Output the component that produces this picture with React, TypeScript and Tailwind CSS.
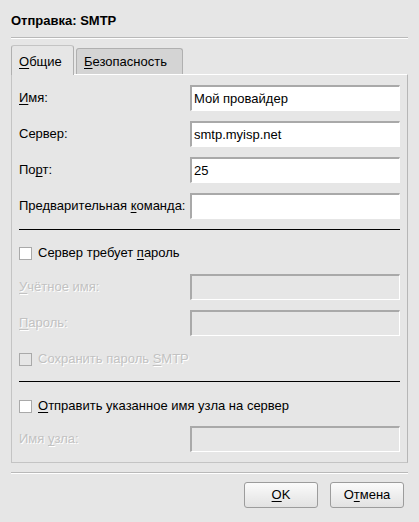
import React from "react";

const FONT = "font-['Liberation_Sans',Arial,sans-serif]";

const Mn: React.FC<{ children: React.ReactNode }> = ({ children }) => (
  <span className="underline underline-offset-[2px]">{children}</span>
);

const TextField: React.FC<{ value?: string; disabled?: boolean }> = ({ value, disabled }) => (
  <div
    className={`w-[210px] h-[26px] flex items-center px-[2px] text-[13px] text-black border-t-2 border-l-2 border-t-[#a9a9a9] border-l-[#a9a9a9] border-b border-r border-b-white border-r-white ${
      disabled ? "bg-[#e6e6e6]" : "bg-white"
    }`}
  >
    {value}
  </div>
);

const Row: React.FC<{ label: React.ReactNode; disabled?: boolean; value?: string; className?: string }> = ({
  label,
  disabled,
  value,
  className = "",
}) => (
  <div className={`flex items-center justify-between h-[26px] ${className}`}>
    <span
      className={`text-[13px] ${
        disabled ? "text-[#c2c2c2] [text-shadow:1px_1px_0_#fff]" : "text-black"
      }`}
    >
      {label}
    </span>
    <TextField value={value} disabled={disabled} />
  </div>
);

const Check: React.FC<{ label: React.ReactNode; disabled?: boolean; className?: string }> = ({
  label,
  disabled,
  className = "",
}) => (
  <div className={`flex items-center h-[26px] ${className}`}>
    <div
      className={`w-[13px] h-[13px] border border-[#a9a9a9] ${disabled ? "bg-[#e6e6e6]" : "bg-white"}`}
    />
    <span
      className={`ml-[6px] text-[13px] ${
        disabled ? "text-[#c2c2c2] [text-shadow:1px_1px_0_#fff]" : "text-black"
      }`}
    >
      {label}
    </span>
  </div>
);

const Btn: React.FC<{ children: React.ReactNode }> = ({ children }) => (
  <button
    type="button"
    className="w-[74px] h-[26px] rounded-[3px] border border-[#9c9c9c] bg-gradient-to-b from-[#fbfbfb] to-[#e2e2e2] text-[13px] text-black flex items-center justify-center"
  >
    {children}
  </button>
);

export default function App() {
  return (
    <div className={`w-[419px] h-[522px] bg-[#e6e6e6] px-[11px] ${FONT}`}>
      <div className="pt-[13px] h-[37px] text-[13px] leading-[16px] font-bold text-black">Отправка: SMTP</div>
      <div className="h-[2px] border-t border-t-[#b9b9b9] border-b border-b-white" />

      {/* tabs */}
      <div className="mt-[6px] flex items-end h-[29px]">
        <div className="relative z-10 w-[63px] h-[30px] -mb-px rounded-t-[3px] border border-b-0 border-[#b0b0b0] border-t-[#c4c4c4] bg-[#e6e6e6] flex items-center pl-[7px] text-[13px] text-black">
          <span className="mt-[2px]">
            <Mn>О</Mn>бщие
          </span>
        </div>
        <div className="ml-[2px] w-[107px] h-[26px] rounded-t-[3px] border border-b-0 border-[#b0b0b0] bg-[#d4d4d4] flex items-center pl-[7px] text-[13px] text-black">
          <span>
            <Mn>Б</Mn>езопасность
          </span>
        </div>
      </div>

      {/* panel */}
      <div className="border border-t-white border-l-[#c4c4c4] border-r-[#b6b6b6] border-b-[#c4c4c4] px-[7px] pb-[10px]">
        <Row
          className="mt-[10px]"
          label={
            <>
              <Mn>И</Mn>мя:
            </>
          }
          value="Мой провайдер"
        />
        <Row className="mt-[10px]" label="Сервер:" value="smtp.myisp.net" />
        <Row
          className="mt-[10px]"
          label={
            <>
              По<Mn>р</Mn>т:
            </>
          }
          value="25"
        />
        <Row
          className="mt-[10px]"
          label={
            <>
              Предварительная <Mn>к</Mn>оманда:
            </>
          }
        />
        <div className="mt-[10px] h-px bg-black" />
        <Check
          className="mt-[10px]"
          label={
            <>
              Сервер требует <Mn>п</Mn>ароль
            </>
          }
        />
        <Row
          className="mt-[8px]"
          disabled
          label={
            <>
              <Mn>У</Mn>чётное имя:
            </>
          }
        />
        <Row
          className="mt-[10px]"
          disabled
          label={
            <>
              <Mn>П</Mn>ароль:
            </>
          }
        />
        <Check
          className="mt-[10px]"
          disabled
          label={
            <>
              Сохранить пароль <Mn>S</Mn>MTP
            </>
          }
        />
        <div className="mt-[9px] h-px bg-black" />
        <Check
          className="mt-[11px]"
          label={
            <>
              <Mn>О</Mn>тправить указанное имя узла на сервер
            </>
          }
        />
        <Row
          className="mt-[7px]"
          disabled
          label={
            <>
              Имя <Mn>у</Mn>зла:
            </>
          }
        />
      </div>

      <div className="mt-[9px] h-[2px] border-t border-t-[#b9b9b9] border-b border-b-white" />

      <div className="mt-[8px] flex justify-end gap-[12px] pr-[4px]">
        <Btn>
          <Mn>O</Mn>K
        </Btn>
        <Btn>
          О<Mn>т</Mn>мена
        </Btn>
      </div>
    </div>
  );
}
